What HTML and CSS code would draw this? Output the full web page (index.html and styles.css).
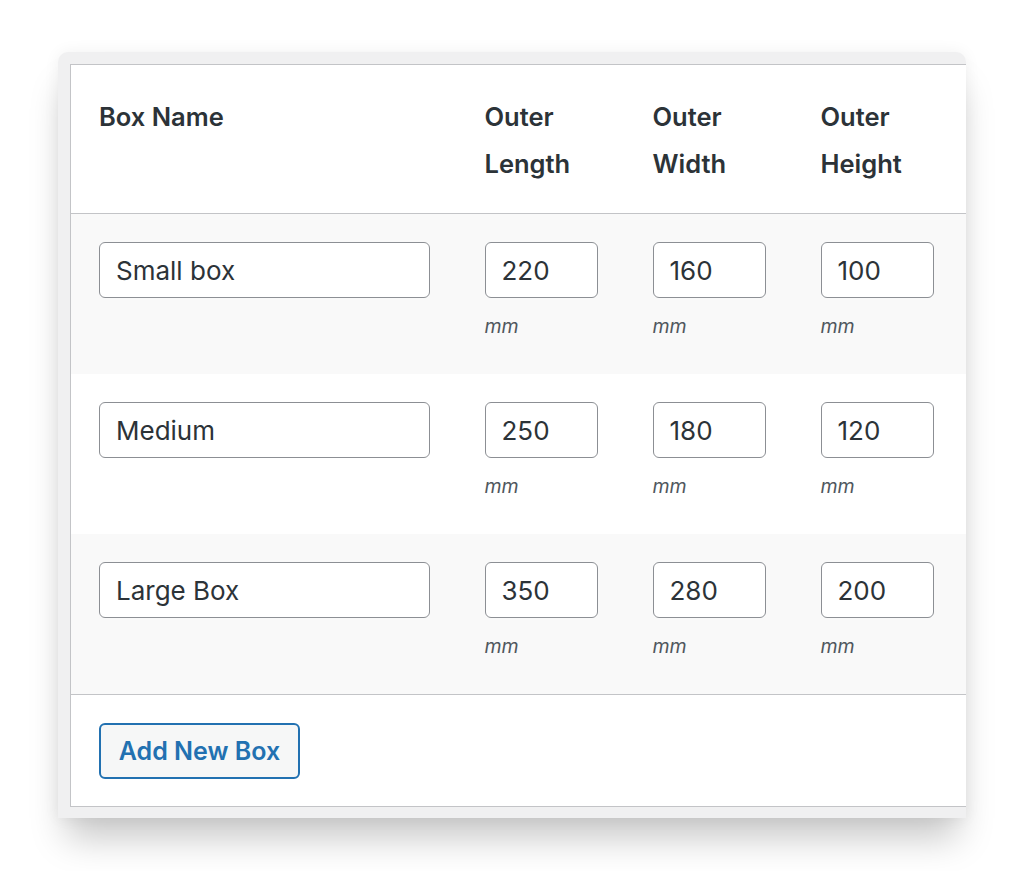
FILE: index.html
```html
<!DOCTYPE html>
<html>
<head>
<meta charset="utf-8">
<link rel="stylesheet" href="styles.css">
</head>
<body>
<div class="window">
  <table class="boxes">
    <colgroup>
      <col class="c-name"><col class="c-dim"><col class="c-dim"><col class="c-last">
    </colgroup>
    <thead>
      <tr>
        <th>Box Name</th>
        <th>Outer<br>Length</th>
        <th>Outer<br>Width</th>
        <th>Outer<br>Height</th>
      </tr>
    </thead>
    <tbody>
      <tr class="alt">
        <td><input class="name" type="text" value="Small box"></td>
        <td><input class="dim" type="text" value="220"><div class="unit">mm</div></td>
        <td><input class="dim" type="text" value="160"><div class="unit">mm</div></td>
        <td><input class="dim" type="text" value="100"><div class="unit">mm</div></td>
      </tr>
      <tr>
        <td><input class="name" type="text" value="Medium"></td>
        <td><input class="dim" type="text" value="250"><div class="unit">mm</div></td>
        <td><input class="dim" type="text" value="180"><div class="unit">mm</div></td>
        <td><input class="dim" type="text" value="120"><div class="unit">mm</div></td>
      </tr>
      <tr class="alt">
        <td><input class="name" type="text" value="Large Box"></td>
        <td><input class="dim" type="text" value="350"><div class="unit">mm</div></td>
        <td><input class="dim" type="text" value="280"><div class="unit">mm</div></td>
        <td><input class="dim" type="text" value="200"><div class="unit">mm</div></td>
      </tr>
    </tbody>
    <tfoot>
      <tr>
        <td colspan="4"><button class="add" type="button">Add New Box</button></td>
      </tr>
    </tfoot>
  </table>
</div>
</body>
</html>
```
FILE: styles.css
```css
html, body {
  margin: 0;
  padding: 0;
  background: #ffffff;
}
body {
  font-family: Inter, "Noto Sans", "Liberation Sans", sans-serif;
  color: #2c3338;
  padding: 52px 0 60px 58px;
}
.window {
  width: 908px;
  height: 766px;
  box-sizing: border-box;
  padding: 12px 0 0 12px;
  background: #f0f0f1;
  border-radius: 10px 10px 0 0;
  overflow: hidden;
  box-shadow: 0 28px 36px -8px rgba(0, 0, 0, 0.22), 0 0 16px rgba(0, 0, 0, 0.06);
}
.boxes {
  border-collapse: collapse;
  table-layout: fixed;
  width: 950px;
  background: #ffffff;
  border: 1px solid #c3c4c7;
}
.c-name { width: 386px; }
.c-dim { width: 168px; }
.c-last { width: 228px; }
.boxes th {
  text-align: left;
  vertical-align: top;
  font-size: 25.5px;
  font-weight: 600;
  line-height: 47px;
  color: #2c3338;
  padding: 28px 10px 26px 28px;
  border-bottom: 1px solid #c3c4c7;
}
.boxes tbody td {
  vertical-align: top;
  padding: 28px 10px 28px 28px;
  height: 104px;
}
.boxes tbody tr.alt td {
  background: #f9f9f9;
}
input {
  font-family: inherit;
  display: block;
  box-sizing: border-box;
  height: 56px;
  margin: 0;
  border: 1.5px solid #8c8f94;
  border-radius: 6px;
  background: #fff;
  color: #2c3338;
  font-size: 26px;
  padding: 0 16px;
  outline: none;
}
input.name { width: 331px; }
input.dim { width: 113px; }
.unit {
  font-style: italic;
  font-size: 19.5px;
  color: #50575e;
  margin-top: 17px;
  line-height: 22px;
}
.boxes tfoot td {
  border-top: 1px solid #c3c4c7;
  padding: 28px 28px 27px 28px;
}
.add {
  font-family: inherit;
  display: block;
  box-sizing: border-box;
  width: 201px;
  height: 56px;
  margin: 0;
  border: 2px solid #2271b1;
  border-radius: 6px;
  background: #f6f7f7;
  color: #2271b1;
  font-size: 25px;
  font-weight: 600;
  padding: 0;
}
```
